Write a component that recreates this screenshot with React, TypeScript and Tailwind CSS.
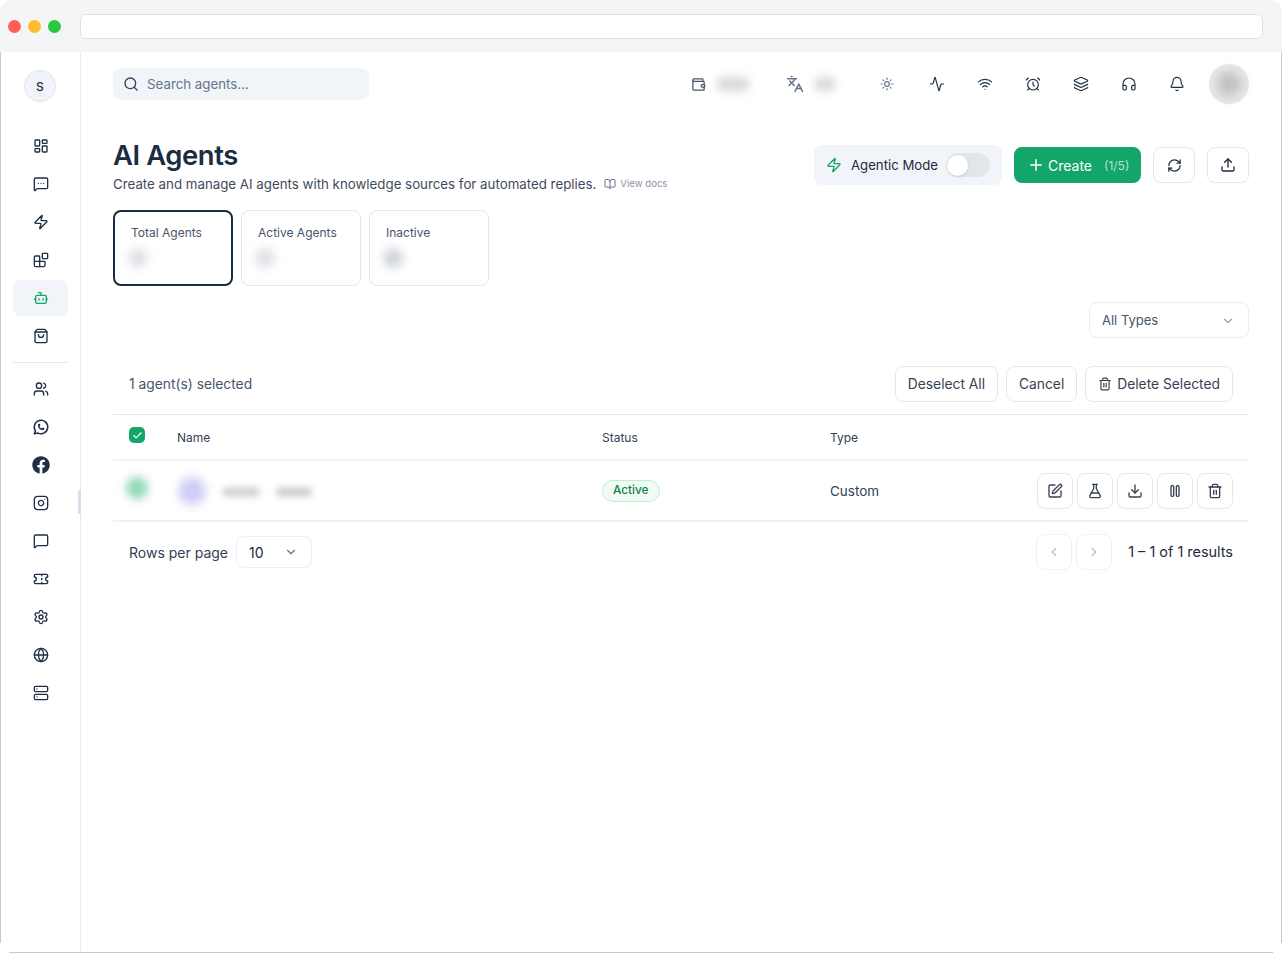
import * as React from 'react'
import {
  Activity,
  AlarmClock,
  Bell,
  Blocks,
  BookOpen,
  Bot,
  Check,
  ChevronDown,
  ChevronLeft,
  ChevronRight,
  Download,
  FlaskConical,
  Globe,
  Headphones,
  Instagram,
  Languages,
  Layers,
  LayoutDashboard,
  MessageSquare,
  MessageSquareMore,
  Plus,
  RefreshCw,
  Search,
  Server,
  Settings,
  ShoppingBag,
  SquarePen,
  Sun,
  Ticket,
  Trash2,
  Upload,
  Users,
  Wallet,
  Wifi,
  Zap,
} from 'lucide-react'
import { FaFacebook } from 'react-icons/fa'
import { TbBrandWhatsapp } from 'react-icons/tb'

function PauseIcon({ size = 16 }: { size?: number }) {
  return (
    <svg width={size} height={size} viewBox="0 0 24 24" fill="none" stroke="currentColor" strokeWidth="2" strokeLinecap="round" strokeLinejoin="round">
      <rect x="6" y="4" width="4" height="16" rx="1.5" />
      <rect x="14" y="4" width="4" height="16" rx="1.5" />
    </svg>
  )
}

const NAV_TOP = [LayoutDashboard, MessageSquareMore, Zap, Blocks, Bot, ShoppingBag]
const NAV_BOTTOM = [Users, TbBrandWhatsapp, FaFacebook, Instagram, MessageSquare, Ticket, Settings, Globe, Server]
const HEADER_ICONS = [Activity, Wifi, AlarmClock, Layers, Headphones, Bell]
const ROW_ACTIONS = [SquarePen, FlaskConical, Download, PauseIcon, Trash2]
const STATS = [
  { label: 'Total Agents', active: true, blur: 'bg-[#dfe1e5]' },
  { label: 'Active Agents', active: false, blur: 'bg-[#dfe1e5]' },
  { label: 'Inactive', active: false, blur: 'bg-[#cfd3da]' },
]

function Sidebar() {
  return (
    <aside className="relative flex w-[81px] shrink-0 flex-col items-center border-r border-[#e8eaed] pt-[18px]">
      <div className="flex h-8 w-8 items-center justify-center rounded-full border border-[#dfe4ea] bg-[#f1f5f9] pt-px text-[12px] font-medium text-[#1e293b]">
        S
      </div>
      <nav className="mt-[25px] flex w-full flex-col items-center">
        {NAV_TOP.map((Icon, i) => (
          <div
            key={i}
            className={
              i === 4
                ? 'my-px flex h-9 w-[55px] items-center justify-center rounded-lg bg-[#f1f5f9] pl-px text-[#16a56a]'
                : 'my-px flex h-9 w-[55px] items-center justify-center pl-px text-[#1e2f46]'
            }
          >
            <Icon size={16} />
          </div>
        ))}
      </nav>
      <div className="my-[7px] h-px w-[55px] bg-[#e5e7eb]" />
      <nav className="flex w-full flex-col items-center">
        {NAV_BOTTOM.map((Icon, i) => (
          <div key={i} className="flex h-[38px] w-[55px] items-center justify-center pl-px text-[#1e2f46]">
            <Icon size={i === 1 || i === 2 ? 18 : 16} />
          </div>
        ))}
      </nav>
      {/* resize handle on the sidebar edge */}
      <div className="absolute right-0 top-[438px] h-6 w-[3px] translate-x-[1px] rounded-full bg-[#d5dde8]" />
    </aside>
  )
}

function TopBar() {
  return (
    <header className="flex h-8 items-center justify-between">
      <div className="flex h-8 w-64 items-center gap-2 rounded-lg bg-[#f1f5f9] px-[10px] text-[13.3px] text-[#64748b]">
        <Search size={16} className="text-[#334155]" />
        <span className="pt-px">Search agents...</span>
      </div>
      <div className="flex items-center text-[#1e2f46]">
        <Wallet size={15} className="text-[#475569]" />
        <div className="ml-[10px] h-[14px] w-[34px] rounded-full bg-[#d8d8d8] blur-[5px]" />
        <Languages size={18} className="ml-[36px] text-[#64748b]" />
        <div className="ml-[10px] h-[14px] w-[22px] rounded-full bg-[#d8d8d8] blur-[5px]" />
        <Sun size={14} className="ml-[44px] text-[#64748b]" />
        <div className="ml-[35px] flex items-center gap-8">
          {HEADER_ICONS.map((Icon, i) => (
            <Icon key={i} size={16} strokeWidth={1.75} />
          ))}
        </div>
        <div className="ml-6 flex h-10 w-10 items-center justify-center rounded-full bg-[#e9e9e9]">
          <div className="h-6 w-6 rounded-full bg-[#bdbdbd] blur-[6px]" />
        </div>
      </div>
    </header>
  )
}

function PageHeading() {
  return (
    <section className="mt-[37px] flex items-start justify-between">
      <div>
        <h1 className="text-[27.4px] leading-[36px] font-semibold tracking-[-0.4px] text-[#1a2b42]">AI Agents</h1>
        <p className="mt-px flex items-center text-[13.3px] leading-5 text-[#3f4b5c]">
          Create and manage AI agents with knowledge sources for automated replies.
          <BookOpen size={12} className="ml-2 text-[#64748b]" />
          <span className="ml-[4px] text-[9.6px] text-[#8a94a6]">View docs</span>
        </p>
      </div>
      <div className="flex items-center pt-[8px]">
        <div className="flex h-10 w-[188px] items-center rounded-lg bg-[#f1f5f9] pl-3 text-[13.2px] text-[#1e293b]">
          <Zap size={16} className="text-[#16a56a]" />
          <span className="ml-[9px] pt-px">Agentic Mode</span>
          <div className="ml-2 flex h-6 w-[44px] items-center rounded-full bg-[#e2e5ea] pl-[1px]">
            <div className="h-[21px] w-[21px] rounded-full bg-white shadow-sm" />
          </div>
        </div>
        <button className="ml-3 flex h-9 w-[127px] items-center rounded-lg bg-[#14a56a] pl-[13px] text-[14px] text-white">
          <Plus size={18} />
          <span className="ml-[3px]">Create</span>
          <span className="ml-3 mt-px text-[12px] text-white/70">(1/5)</span>
        </button>
        <button className="ml-3 flex h-9 w-[42px] items-center justify-center rounded-lg border border-[#e5e7eb] text-[#1e293b]">
          <RefreshCw size={15} />
        </button>
        <button className="ml-3 flex h-9 w-[42px] items-center justify-center rounded-lg border border-[#e5e7eb] text-[#1e293b]">
          <Upload size={16} />
        </button>
      </div>
    </section>
  )
}

function StatCards() {
  return (
    <section className="mt-[16px] flex gap-2">
      {STATS.map((stat) => (
        <div
          key={stat.label}
          className={
            stat.active
              ? 'h-[76px] w-[120px] rounded-lg border-2 border-[#1a2b42] px-4 pt-[13px]'
              : 'h-[76px] w-[120px] rounded-lg border border-[#e5e7eb] px-4 pt-[14px]'
          }
        >
          <div className="text-[12px] leading-4 text-[#475569]">{stat.label}</div>
          <div className={`mt-[7px] -ml-[3px] h-5 w-5 rounded-full blur-[5px] ${stat.blur}`} />
        </div>
      ))}
    </section>
  )
}

function AgentsTable() {
  return (
    <section className="mt-4">
      <div className="flex justify-end">
        <div className="flex h-9 w-40 items-center justify-between rounded-lg border border-[#e9ebee] pl-3 pr-[13px] pt-px text-[13px] text-[#475569]">
          All Types
          <ChevronDown size={14} className="text-[#94a3b8]" />
        </div>
      </div>

      <div className="mt-4 flex h-[61px] items-center justify-between border-b border-[#e5e7eb] px-4 pb-px text-[13.8px]">
        <span className="pt-px text-[#475569]">1 agent(s) selected</span>
        <div className="flex gap-2 text-[#374151]">
          <button className="h-9 rounded-lg border border-[#e5e7eb] px-3 pt-px">Deselect All</button>
          <button className="h-9 rounded-lg border border-[#e5e7eb] px-3 pt-px">Cancel</button>
          <button className="flex h-9 items-center gap-[5px] rounded-lg border border-[#e5e7eb] px-3 pt-px">
            <Trash2 size={14} />
            Delete Selected
          </button>
        </div>
      </div>

      <div className="flex h-[46px] items-center border-b-2 border-[#f3f4f6] text-[12px] text-[#334155]">
        <div className="w-16 pl-4">
          <div className="mb-1 flex h-4 w-4 items-center justify-center rounded-[5px] bg-[#14a56a] text-white">
            <Check size={11} strokeWidth={2.5} />
          </div>
        </div>
        <div className="w-[425px] pt-[2px]">Name</div>
        <div className="w-[228px] pt-[2px]">Status</div>
        <div className="pt-[2px]">Type</div>
      </div>

      <div className="flex h-[61px] items-center border-b-2 border-[#f1f2f4] text-[13.5px]">
        <div className="w-16 pl-4">
          <div className="mb-[6px] -ml-[3px] h-[22px] w-[22px] rounded-full bg-[#8fd8b5] blur-[5px]" />
        </div>
        <div className="flex w-[425px] items-center">
          <div className="ml-px h-7 w-7 rounded-full bg-[#cfcdf7] blur-[5px]" />
          <div className="ml-4 mr-4 mt-[2px] h-[10px] w-[38px] rounded-full bg-[#d4d4d4] blur-[3px]" />
          <div className="mt-[2px] h-[10px] w-9 rounded-full bg-[#d0d0d0] blur-[3px]" />
        </div>
        <div className="w-[228px]">
          <span className="inline-flex h-[22px] items-center rounded-full border border-[#bbf0cf] bg-[#effcf3] px-[10px] pt-px text-[11.8px] font-medium text-[#15803d]">
            Active
          </span>
        </div>
        <div className="pt-px text-[#334155]">Custom</div>
        <div className="ml-auto flex gap-1 pr-4">
          {ROW_ACTIONS.map((Icon, i) => (
            <button
              key={i}
              className="flex h-9 w-9 items-center justify-center rounded-lg border border-[#e5e7eb] text-[#374151]"
            >
              <Icon size={16} />
            </button>
          ))}
        </div>
      </div>

      <div className="flex h-[60px] items-center justify-between px-4 text-[14px] text-[#334155]">
        <div className="flex items-center gap-2">
          Rows per page
          <div className="flex h-8 w-[76px] items-center justify-between rounded-lg border border-[#eceef1] pl-3 pr-[13px] text-[#1e293b]">
            10
            <ChevronDown size={14} className="text-[#64748b]" />
          </div>
        </div>
        <div className="flex items-center">
          <button className="flex h-9 w-9 items-center justify-center rounded-lg border border-[#f1f2f4] text-[#b6bcc6]">
            <ChevronLeft size={14} />
          </button>
          <button className="ml-1 flex h-9 w-9 items-center justify-center rounded-lg border border-[#f1f2f4] text-[#b6bcc6]">
            <ChevronRight size={14} />
          </button>
          <span className="ml-4 text-[14.45px] text-[#1e293b]">1 – 1 of 1 results</span>
        </div>
      </div>
    </section>
  )
}

export default function App() {
  return (
    <div className="relative flex h-[953px] w-[1282px] flex-col overflow-hidden bg-white font-['Inter',sans-serif]">
      <div className="flex h-[52px] shrink-0 items-center rounded-t-xl bg-[#f4f5f7] pl-2">
        <div className="flex gap-[7px]">
          <div className="h-[13px] w-[13px] rounded-full bg-[#ff5f57]" />
          <div className="h-[13px] w-[13px] rounded-full bg-[#febc2e]" />
          <div className="h-[13px] w-[13px] rounded-full bg-[#28c840]" />
        </div>
        <div className="ml-[19px] h-[25px] w-[1183px] rounded-md border border-[#dfe1e5] bg-white" />
      </div>
      <div className="mb-px flex flex-1">
        <Sidebar />
        <main className="flex-1 pl-8 pr-[33px] pt-4">
          <TopBar />
          <PageHeading />
          <StatCards />
          <AgentsTable />
        </main>
      </div>
      {/* window outline, cut off at the rounded bottom corners */}
      <div className="absolute bottom-[10px] left-0 top-[52px] w-px bg-[#c9c9c9]" />
      <div className="absolute bottom-[10px] right-0 top-[52px] w-px bg-[#c9c9c9]" />
      <div className="absolute bottom-0 left-[9px] right-[9px] h-px bg-[#c9c9c9]" />
    </div>
  )
}
